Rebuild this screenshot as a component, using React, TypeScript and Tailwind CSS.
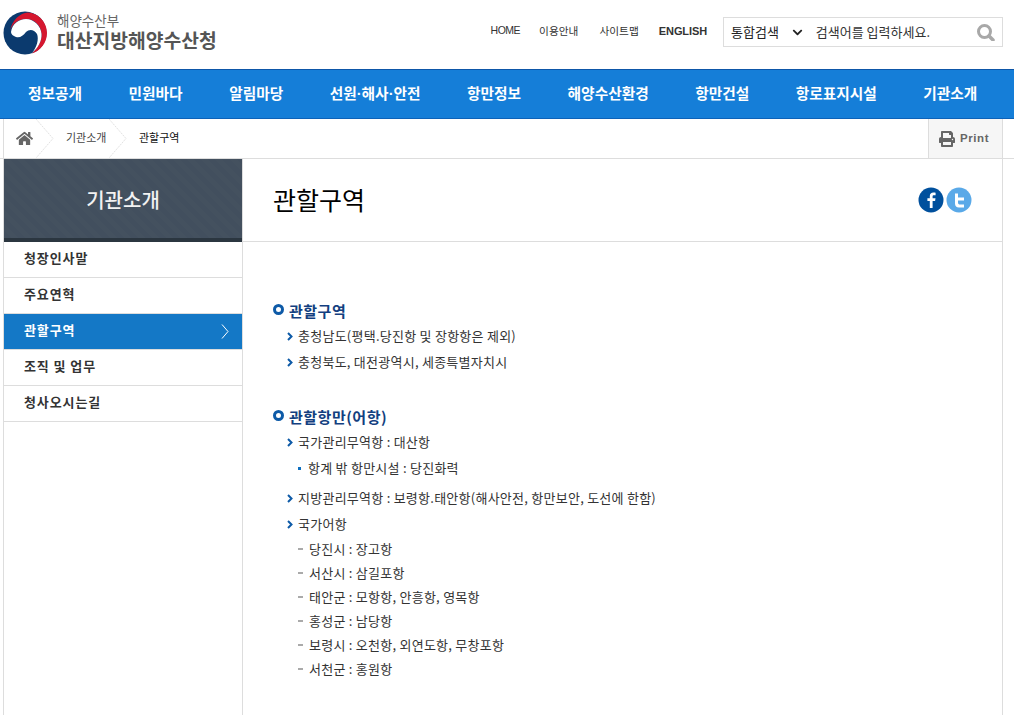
/**
 * 대산지방해양수산청 - 관할구역 page
 */

import { FaChevronDown, FaHome, FaPrint } from "react-icons/fa";

const navItems = ["정보공개", "민원바다", "알림마당", "선원·해사·안전", "항만정보", "해양수산환경", "항만건설", "항로표지시설", "기관소개"];

const sideItems = ["청장인사말", "주요연혁", "관할구역", "조직 및 업무", "청사오시는길"];

const fishingPorts = [
  "당진시 : 장고항",
  "서산시 : 삼길포항",
  "태안군 : 모항항, 안흥항, 영목항",
  "홍성군 : 남당항",
  "보령시 : 오천항, 외연도항, 무창포항",
  "서천군 : 홍원항",
];

const Logo = () => (
  <svg width="50" height="48" viewBox="0 0 50 48" className="shrink-0">
    <circle cx="25" cy="25" r="21.500" fill="#0b3a6e" />
    <path d="M10 23C12 12 20 5 28 4.500C38 5 47 14 47 25C47 35 40 43 32 45.500C38 40 42 33 41.500 26C41 17 34 11 26 11C18 11 12 16 10 23Z" fill="#d5172f" />
    <path d="M11 24C12 16 19 11 26 11C34 11 41 18 41.500 26C42 33 38 40 32 45C37 39 39 31 37 26C34 21 29 21 26 24C23 28 20 30 16 29C13 28 11 26 11 24Z" fill="#fff" />
  </svg>
);

const SearchGlyph = () => (
  <svg width="18" height="17" viewBox="0 0 18 17" className="ml-auto shrink-0">
    <circle cx="7.500" cy="7.500" r="6" fill="none" stroke="#a8a8a8" strokeWidth="3" />
    <path d="M12 12l4 4" stroke="#a8a8a8" strokeWidth="3.500" strokeLinecap="round" />
  </svg>
);

const FacebookIcon = () => (
  <svg width="26" height="26" viewBox="0 0 26 26">
    <circle cx="13" cy="13" r="12.500" fill="#00509d" />
    <path d="M14.600 21v-7h2.500l.4-2.800h-2.900V9.600c0-.9.3-1.400 1.400-1.400h1.600V5.700c-.4 0-1.200-.1-2.200-.1-2.200 0-3.600 1.300-3.600 3.700v1.900H9.400V14h2.400v7z" fill="#fff" />
  </svg>
);

const TwitterIcon = () => (
  <svg width="26" height="26" viewBox="0 0 26 26">
    <circle cx="13" cy="13" r="12.500" fill="#5aa9e8" />
    <path d="M9 6.500h3v4h6v3h-6v2c0 1.400.8 2 2 2h4v3h-5c-2.500 0-4-1.600-4-4z" fill="#fff" />
  </svg>
);

const CrumbArrow = () => (
  <svg width="18" height="39" viewBox="0 0 18 39" className="shrink-0">
    <path d="M0 0l17 19.500L0 39" fill="none" stroke="#e2e2e2" strokeDasharray="2 1" />
  </svg>
);

const ListArrow = () => (
  <svg width="6" height="9" viewBox="0 0 6 9" className="shrink-0">
    <path d="M1 1l3.500 3.500L1 8" fill="none" stroke="#0d5aa7" strokeWidth="2" />
  </svg>
);

const SectionTitle = ({ children }: { children: string }) => (
  <h3 className="flex h-5 items-center gap-[5px] text-[15px] font-bold tracking-[0.5px] text-[#133f80]">
    <span className="mb-[3px] h-[11px] w-[11px] rounded-full border-[3px] border-[#0d5aa7] bg-white" />
    {children}
  </h3>
);

const Arrow = ({ children }: { children: string }) => (
  <li className="flex h-[26px] items-center gap-[5px] pl-[14px]">
    <ListArrow />
    {children}
  </li>
);

const App = () => {
  return (
    <div className="h-[715px] w-[1014px] overflow-hidden bg-white font-['Noto_Sans_CJK_KR','Noto_Sans',sans-serif] text-[#333]">
      {/* Header */}
      <header className="flex h-[69px] items-center pb-[5px] pr-[11px]">
        <Logo />
        <div className="ml-[7px] flex flex-col">
          <span className="text-[13.500px] leading-[14px] text-[#666]">해양수산부</span>
          <span className="mt-[1px] text-[19.300px] font-bold leading-[24px] text-[#555]">대산지방해양수산청</span>
        </div>
        <div className="ml-auto flex items-center text-[#333]">
          <div className="mb-[2px] flex items-center text-[10.700px]">
            <span className="mr-[19px] font-['Liberation_Sans',sans-serif] text-[10.500px] tracking-[-0.5px]">HOME</span>
            <span className="mr-[21px]">이용안내</span>
            <span className="mr-[20px]">사이트맵</span>
            <span className="mr-[16px] font-['Liberation_Sans',sans-serif] text-[11px] font-bold tracking-[-0.1px]">ENGLISH</span>
          </div>
          <div className="flex h-[30px] w-[280px] items-center border border-[#ddd] px-[7px] text-[13px]">
            <span className="text-[#222]">통합검색</span>
            <FaChevronDown size={11} className="ml-[13px] text-[#222]" />
            <span className="ml-[13px] text-[#333]">검색어를 입력하세요.</span>
            <SearchGlyph />
          </div>
        </div>
      </header>

      {/* Main navigation */}
      <nav className="flex h-[50px] items-center gap-[46.500px] border-y border-t-[#0d56a8] border-b-[#0d62b8] bg-[#157ed8] pl-[28px] font-['Liberation_Sans','Noto_Sans_CJK_KR',sans-serif] text-[14.700px] font-bold text-white">
        {navItems.map((item) => (
          <a key={item} className="whitespace-nowrap">
            {item}
          </a>
        ))}
      </nav>

      {/* Breadcrumb */}
      <div className="flex h-[40px] border-b border-[#ddd] pl-[3px] pr-[11px]">
        <div className="flex flex-1 items-center border-l border-[#ddd] text-[11px]">
          <div className="flex w-[32px] items-center justify-end pr-[3px] text-[#666]">
            <FaHome size={17} />
          </div>
          <CrumbArrow />
          <span className="ml-[12px] mb-[2px] w-[40px] whitespace-nowrap text-[#444]">기관소개</span>
          <div className="ml-[3px]">
            <CrumbArrow />
          </div>
          <span className="ml-[12px] mb-[2px] whitespace-nowrap text-[#111]">관할구역</span>
          <div className="ml-auto flex h-full w-[75px] items-center justify-center gap-[5px] border-x border-[#ddd] bg-[#f6f6f6] pr-[3px] text-[#666]">
            <FaPrint size={16} />
            <span className="font-['Liberation_Sans',sans-serif] text-[11.500px] font-bold tracking-[0.6px]">Print</span>
          </div>
        </div>
      </div>

      <div className="flex h-[556px] pl-[3px] pr-[11px]">
        {/* Sidebar */}
        <aside className="flex w-[240px] shrink-0 flex-col border-x border-[#ddd]">
          <div className="flex h-[83px] items-center justify-center border-b-4 border-[#2b3640] bg-[#424f5e] bg-[repeating-linear-gradient(45deg,#424f5e_0,#424f5e_5px,#44515f_5px,#44515f_10px)] pt-[3px] text-[20px] font-medium text-[#f2f2f2]">
            기관소개
          </div>
          {sideItems.map((item) => {
            const active = item === "관할구역";
            return (
              <a
                key={item}
                className={`flex h-[36px] items-center justify-between border-b border-[#ddd] pb-[3px] pl-[20px] pr-[13px] text-[13px] font-bold tracking-[0.9px] ${
                  active ? "bg-[#1478c6] text-white" : "text-[#333]"
                }`}
              >
                {item}
                {active && (
                  <svg width="8" height="15" viewBox="0 0 8 15" className="mt-[3px] shrink-0">
                    <path d="M1 .5l6 7-6 7" fill="none" stroke="#fff" />
                  </svg>
                )}
              </a>
            );
          })}
        </aside>

        {/* Content */}
        <main className="flex min-w-0 flex-1 flex-col border-r border-[#ddd]">
          <div className="flex h-[83px] shrink-0 items-center justify-between border-b border-[#ddd] px-[30px]">
            <h2 className="text-[25px] font-normal text-black">관할구역</h2>
            <div className="flex gap-[2px]">
              <FacebookIcon />
              <TwitterIcon />
            </div>
          </div>

          <div className="pl-[30px] pt-[59px] text-[13px] tracking-[0.25px] text-[#333]">
            <SectionTitle>관할구역</SectionTitle>
            <ul className="mt-[2px]">
              <Arrow>충청남도(평택.당진항 및 장항항은 제외)</Arrow>
              <Arrow>충청북도, 대전광역시, 세종특별자치시</Arrow>
            </ul>

            <div className="mt-[32px]">
              <SectionTitle>관할항만(어항)</SectionTitle>
            </div>
            <ul className="mt-[2px]">
              <Arrow>국가관리무역항 : 대산항</Arrow>
              <li className="flex h-[26px] items-center gap-[7px] pl-[25px]">
                <span className="h-[3px] w-[3px] bg-[#0d6fc0]" />
                항계 밖 항만시설 : 당진화력
              </li>
              <li className="h-[4px]" />
              <Arrow>지방관리무역항 : 보령항.태안항(해사안전, 항만보안, 도선에 한함)</Arrow>
              <Arrow>국가어항</Arrow>
            </ul>
            <ul>
              {fishingPorts.map((port) => (
                <li key={port} className="flex h-[24px] items-center gap-[6px] pl-[25px]">
                  <span className="h-[2px] w-[5px] bg-[#aaa]" />
                  {port}
                </li>
              ))}
            </ul>
          </div>
        </main>
      </div>
    </div>
  );
};

export default App;
